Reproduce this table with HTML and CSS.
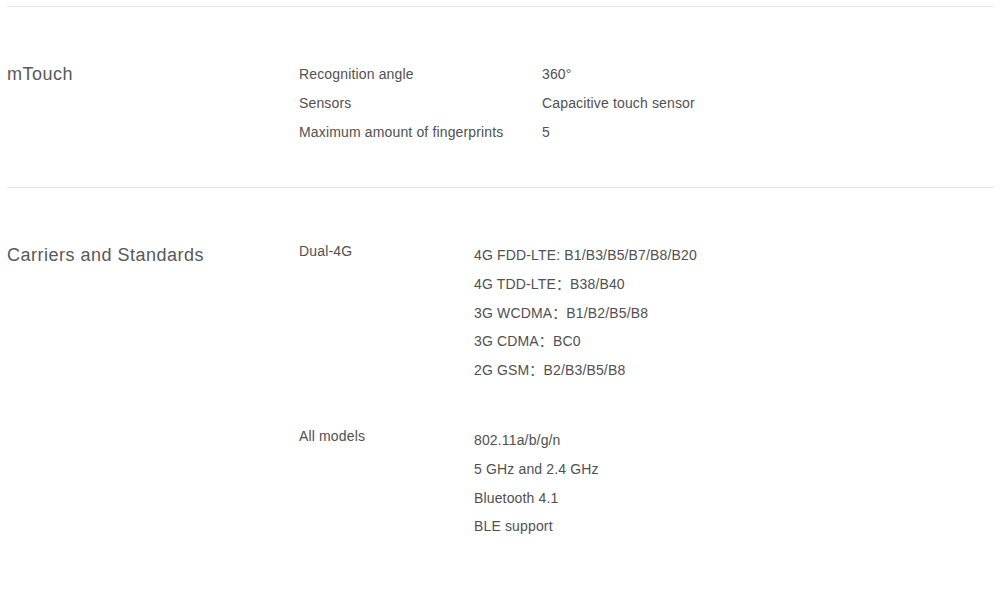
FILE: index.html
```html
<!DOCTYPE html>
<html lang="en">

<head>
    <meta charset="UTF-8">
    <meta name="viewport" content="width=device-width, initial-scale=1">
    <title>Specs</title>
    <link rel="stylesheet" href="styles.css">
</head>

<body>
    <div class="specs">
        <section class="spec">
            <h2 class="spec-title">mTouch</h2>
            <table class="spec-table">
                <tr>
                    <td class="spec-label">Recognition angle</td>
                    <td>360°</td>
                </tr>
                <tr>
                    <td class="spec-label">Sensors</td>
                    <td>Capacitive touch sensor</td>
                </tr>
                <tr>
                    <td class="spec-label">Maximum amount of fingerprints</td>
                    <td>5</td>
                </tr>
            </table>
        </section>

        <section class="spec">
            <h2 class="spec-title">Carriers and Standards</h2>
            <div class="spec-groups">
                <div class="spec-group">
                    <div class="group-label">Dual-4G</div>
                    <ul class="group-values">
                        <li>4G FDD-LTE: B1/B3/B5/B7/B8/B20</li>
                        <li>4G TDD-LTE：B38/B40</li>
                        <li>3G WCDMA：B1/B2/B5/B8</li>
                        <li>3G CDMA：BC0</li>
                        <li>2G GSM：B2/B3/B5/B8</li>
                    </ul>
                </div>
                <div class="spec-group">
                    <div class="group-label">All models</div>
                    <ul class="group-values">
                        <li>802.11a/b/g/n</li>
                        <li>5 GHz and 2.4 GHz</li>
                        <li>Bluetooth 4.1</li>
                        <li>BLE support</li>
                    </ul>
                </div>
            </div>
        </section>
    </div>
</body>

</html>
```

FILE: styles.css
```css
body {
    margin: 0;
    background-color: #fff;
    font-family: 'Liberation Sans', Arial, "Noto Sans CJK SC", sans-serif;
    color: #505050;
}

.specs {
    margin: 0 6px 0 7px;
    padding-top: 6px;
}

.spec {
    display: grid;
    grid-template-columns: 292px 1fr;
    border-top: 1px solid #e6e6e6;
    padding: 53px 0 40px;
}

.spec-title {
    margin: 0;
    font-size: 18px;
    font-weight: normal;
    line-height: 29px;
    letter-spacing: 0.5px;
    color: #585858;
}

/* mTouch table */
.spec-table {
    border-collapse: collapse;
    font-size: 14px;
    letter-spacing: 0.15px;
}

.spec-table td {
    padding: 0;
    line-height: 29px;
    vertical-align: top;
}

.spec-table .spec-label {
    width: 243px;
}

/* Carriers groups */
.spec-groups {
    display: flex;
    flex-direction: column;
    gap: 41px;
}

.spec-group {
    display: grid;
    grid-template-columns: 175px 1fr;
    font-size: 14px;
    letter-spacing: 0.15px;
}

.group-label {
    line-height: 20px;
}

.group-values {
    list-style: none;
    margin: 0;
    padding: 0;
}

.group-values li {
    line-height: 28.8px;
}
```
